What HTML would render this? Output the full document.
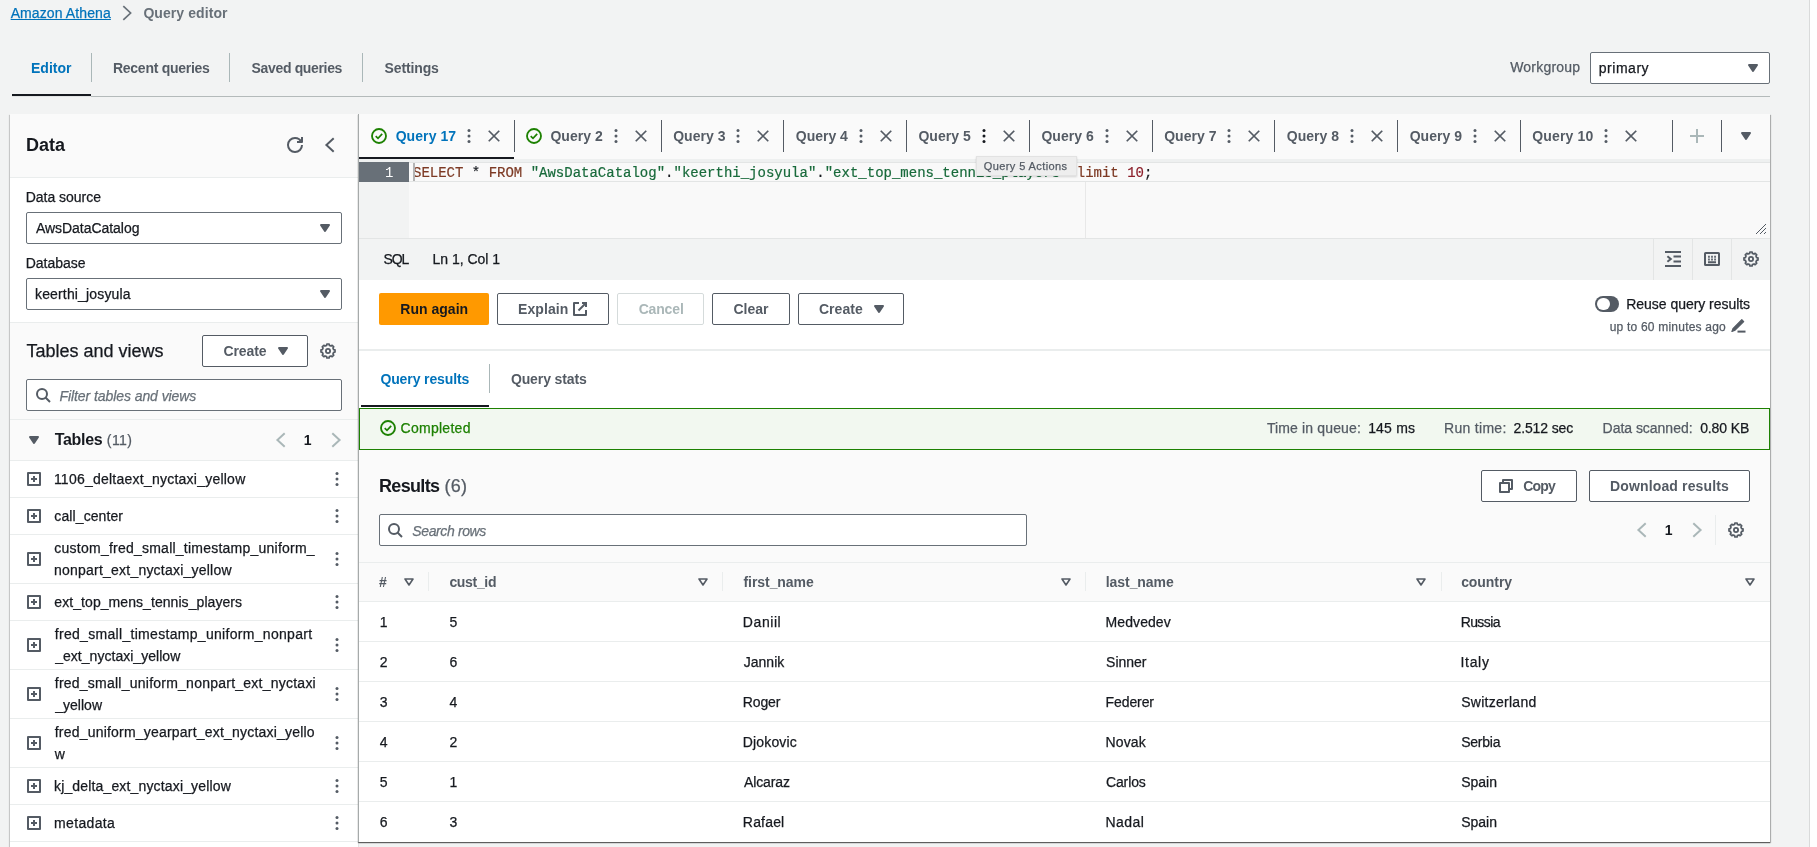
<!DOCTYPE html>
<html lang="en"><head><meta charset="utf-8"><title>Athena Query editor</title>
<style>
html,body{margin:0;padding:0}
body{width:1817px;height:847px;overflow:hidden;background:#f2f3f3;font-family:"Liberation Sans", sans-serif;font-size:14px;color:#16191f;position:relative}
</style></head><body>
<div id="app" style="position:absolute;left:0;top:0;width:1817px;height:847px;overflow:hidden;will-change:transform">
<div style="position:absolute;left:1809px;top:0px;width:1px;height:847px;background:#d9dada"></div>
<div style="position:absolute;left:1810px;top:0px;width:7px;height:847px;background:#fefefe"></div>
<div style="position:absolute;left:10.67px;top:2.0px;line-height:22px;font-size:14px;font-weight:400;color:#0073bb;white-space:pre;letter-spacing:0.106px;text-decoration:underline;-webkit-text-stroke:0.25px;">Amazon Athena</div>
<svg width="16" height="16" viewBox="0 0 16 16" style="position:absolute;left:118.6px;top:5.0px;overflow:visible"><path d="M4.300 1.200L11.600 8l-7.300 6.800" fill="none" stroke="#687078" stroke-width="1.7"/></svg>
<div style="position:absolute;left:143.38px;top:2.0px;line-height:22px;font-size:14px;font-weight:700;color:#687078;white-space:pre;letter-spacing:0.081px;">Query editor</div>
<div style="position:absolute;left:91px;top:96px;width:1679px;height:1px;background:#b4baba"></div>
<div style="position:absolute;left:12px;top:96px;width:79px;height:1px;background:#e3e5e5"></div>
<div style="position:absolute;left:12px;top:94px;width:79px;height:2px;background:#16191f"></div>
<div style="position:absolute;left:31.01px;top:57.0px;line-height:22px;font-size:14px;font-weight:700;color:#0073bb;white-space:pre;letter-spacing:0.009px;">Editor</div>
<div style="position:absolute;left:91px;top:53px;width:1px;height:29px;background:#aab7b8"></div>
<div style="position:absolute;left:113.01px;top:57.0px;line-height:22px;font-size:14px;font-weight:700;color:#545b64;white-space:pre;letter-spacing:-0.270px;">Recent queries</div>
<div style="position:absolute;left:229px;top:53px;width:1px;height:29px;background:#aab7b8"></div>
<div style="position:absolute;left:251.55px;top:57.0px;line-height:22px;font-size:14px;font-weight:700;color:#545b64;white-space:pre;letter-spacing:-0.342px;">Saved queries</div>
<div style="position:absolute;left:362px;top:53px;width:1px;height:29px;background:#aab7b8"></div>
<div style="position:absolute;left:384.55px;top:57.0px;line-height:22px;font-size:14px;font-weight:700;color:#545b64;white-space:pre;letter-spacing:-0.130px;">Settings</div>
<div style="position:absolute;left:1510.14px;top:56.0px;line-height:22px;font-size:14px;font-weight:400;color:#545b64;white-space:pre;letter-spacing:0.223px;-webkit-text-stroke:0.25px;">Workgroup</div>
<div style="position:absolute;left:1590px;top:52px;width:180px;height:32px;background:#fff;border:1px solid #687078;border-radius:2px;box-sizing:border-box"></div>
<div style="position:absolute;left:1598.8px;top:57.0px;line-height:22px;font-size:14px;font-weight:400;color:#16191f;white-space:pre;letter-spacing:0.518px;-webkit-text-stroke:0.25px;">primary</div>
<svg width="16" height="16" viewBox="0 0 16 16" style="position:absolute;left:1744.5px;top:60.0px;overflow:visible"><path d="M4 5h8l-4 6z" fill="#545b64" stroke="#545b64" stroke-width="2" stroke-linejoin="round"/></svg>
<div style="position:absolute;left:10px;top:114px;width:348px;height:740px;background:#fff;box-shadow:0 1px 1px 0 rgba(0,0,0,.35),-1px 1px 1px 0 rgba(0,0,0,.13)"></div>
<div style="position:absolute;left:10px;top:114px;width:348px;height:63px;background:#fafafa;border-bottom:1px solid #eaeded"></div>
<div style="position:absolute;left:26.0px;top:134.0px;line-height:22px;font-size:18px;font-weight:700;color:#16191f;white-space:pre;letter-spacing:-0.042px;">Data</div>
<svg width="16" height="16" viewBox="0 0 16 16" style="position:absolute;left:287.0px;top:137.0px;overflow:visible"><path d="M10 5h5V0" fill="none" stroke="#545b64" stroke-width="2" stroke-linejoin="round"/><path d="M15 8a6.957 6.957 0 0 1-7 7 6.957 6.957 0 0 1-7-7 6.957 6.957 0 0 1 7-7 6.870 6.870 0 0 1 6.300 4" fill="none" stroke="#545b64" stroke-width="2"/></svg>
<svg width="16" height="16" viewBox="0 0 16 16" style="position:absolute;left:322.0px;top:137.0px;overflow:visible"><path d="M11.700 1.200L4.400 8l7.300 6.800" fill="none" stroke="#545b64" stroke-width="2"/></svg>
<div style="position:absolute;left:25.8px;top:186.0px;line-height:22px;font-size:14px;font-weight:400;color:#16191f;white-space:pre;letter-spacing:-0.036px;-webkit-text-stroke:0.25px;">Data source</div>
<div style="position:absolute;left:26px;top:212px;width:316px;height:32px;background:#fff;border:1px solid #687078;border-radius:2px;box-sizing:border-box"></div>
<div style="position:absolute;left:35.92px;top:217.0px;line-height:22px;font-size:14px;font-weight:400;color:#16191f;white-space:pre;letter-spacing:-0.039px;-webkit-text-stroke:0.25px;">AwsDataCatalog</div>
<svg width="16" height="16" viewBox="0 0 16 16" style="position:absolute;left:316.5px;top:220.0px;overflow:visible"><path d="M4 5h8l-4 6z" fill="#545b64" stroke="#545b64" stroke-width="2" stroke-linejoin="round"/></svg>
<div style="position:absolute;left:25.8px;top:252.0px;line-height:22px;font-size:14px;font-weight:400;color:#16191f;white-space:pre;letter-spacing:-0.045px;-webkit-text-stroke:0.25px;">Database</div>
<div style="position:absolute;left:26px;top:278px;width:316px;height:32px;background:#fff;border:1px solid #687078;border-radius:2px;box-sizing:border-box"></div>
<div style="position:absolute;left:35.01px;top:283.0px;line-height:22px;font-size:14px;font-weight:400;color:#16191f;white-space:pre;letter-spacing:0.154px;-webkit-text-stroke:0.25px;">keerthi_josyula</div>
<svg width="16" height="16" viewBox="0 0 16 16" style="position:absolute;left:316.5px;top:286.0px;overflow:visible"><path d="M4 5h8l-4 6z" fill="#545b64" stroke="#545b64" stroke-width="2" stroke-linejoin="round"/></svg>
<div style="position:absolute;left:10px;top:322px;width:348px;height:98px;background:#fafafa;border-top:1px solid #eaeded;border-bottom:1px solid #eaeded;box-sizing:border-box"></div>
<div style="position:absolute;left:26.55px;top:339.5px;line-height:22px;font-size:18px;font-weight:400;color:#16191f;white-space:pre;letter-spacing:-0.012px;-webkit-text-stroke:0.25px;">Tables and views</div>
<div style="position:absolute;left:202px;top:335px;width:106px;height:32px;background:#fff;border:1px solid #545b64;border-radius:2px;box-sizing:border-box"></div>
<div style="position:absolute;left:223.38px;top:340.0px;line-height:22px;font-size:14px;font-weight:700;color:#545b64;white-space:pre;letter-spacing:-0.088px;">Create</div>
<svg width="16" height="16" viewBox="0 0 16 16" style="position:absolute;left:274.5px;top:343.0px;overflow:visible"><path d="M4 5h8l-4 6z" fill="#545b64" stroke="#545b64" stroke-width="2" stroke-linejoin="round"/></svg>
<svg width="16" height="16" viewBox="0 0 16 16" style="position:absolute;left:320.25px;top:342.5px;overflow:visible"><path d="M6.65 2.36L6.89 0.99L9.11 0.99L9.35 2.36L11.03 3.05L12.17 2.26L13.74 3.83L12.95 4.97L13.64 6.65L15.01 6.89L15.01 9.11L13.64 9.35L12.95 11.03L13.74 12.17L12.17 13.74L11.03 12.95L9.35 13.64L9.11 15.01L6.89 15.01L6.65 13.64L4.97 12.95L3.83 13.74L2.26 12.17L3.05 11.03L2.36 9.35L0.99 9.11L0.99 6.89L2.36 6.65L3.05 4.97L2.26 3.83L3.83 2.26L4.97 3.05z" fill="none" stroke="#545b64" stroke-width="1.700" stroke-linejoin="round"/><circle cx="8" cy="8" r="2.100" fill="none" stroke="#545b64" stroke-width="1.800"/></svg>
<div style="position:absolute;left:26px;top:379px;width:316px;height:32px;background:#fff;border:1px solid #687078;border-radius:2px;box-sizing:border-box"></div>
<svg width="16" height="16" viewBox="0 0 16 16" style="position:absolute;left:35.0px;top:387.3px;overflow:visible"><circle cx="7" cy="7" r="5" fill="none" stroke="#545b64" stroke-width="2"/><path d="M15 15l-4.500-4.500" fill="none" stroke="#545b64" stroke-width="2"/></svg>
<div style="position:absolute;left:59.52px;top:384.5px;line-height:22px;font-size:14px;font-weight:400;color:#687078;white-space:pre;letter-spacing:-0.077px;font-style:italic;-webkit-text-stroke:0.25px;">Filter tables and views</div>
<div style="position:absolute;left:10px;top:420px;width:348px;height:41px;background:#fafafa;border-bottom:1px solid #eaeded;box-sizing:border-box"></div>
<svg width="16" height="16" viewBox="0 0 16 16" style="position:absolute;left:26.0px;top:431.5px;overflow:visible"><path d="M4 5h8l-4 6z" fill="#545b64" stroke="#545b64" stroke-width="2" stroke-linejoin="round"/></svg>
<div style="position:absolute;left:54.77px;top:428.5px;line-height:22px;font-size:16px;font-weight:700;color:#16191f;white-space:pre;letter-spacing:-0.313px;">Tables</div>
<div style="position:absolute;left:106.83px;top:429.0px;line-height:22px;font-size:14px;font-weight:400;color:#545b64;white-space:pre;letter-spacing:0.409px;-webkit-text-stroke:0.25px;">(11)</div>
<svg width="16" height="16" viewBox="0 0 16 16" style="position:absolute;left:272.5px;top:431.9px;overflow:visible"><path d="M11.700 1.200L4.400 8l7.300 6.800" fill="none" stroke="#aab7b8" stroke-width="2"/></svg>
<div style="position:absolute;left:303.86px;top:429.0px;line-height:22px;font-size:14px;font-weight:700;color:#16191f;white-space:pre;letter-spacing:0.000px;">1</div>
<svg width="16" height="16" viewBox="0 0 16 16" style="position:absolute;left:327.7px;top:431.9px;overflow:visible"><path d="M4.300 1.200L11.600 8l-7.300 6.800" fill="none" stroke="#aab7b8" stroke-width="2"/></svg>
<div style="position:absolute;left:10px;top:497px;width:348px;height:1px;background:#eaeded"></div>
<svg width="16" height="16" viewBox="0 0 16 16" style="position:absolute;left:26.0px;top:471.0px;overflow:visible"><path d="M2 2h12v12H2z" fill="none" stroke="#545b64" stroke-width="2" stroke-linejoin="round"/><path d="M5 8h6M8 5v6" fill="none" stroke="#545b64" stroke-width="2"/></svg>
<svg width="16" height="16" viewBox="0 0 16 16" style="position:absolute;left:328.9px;top:471.0px;overflow:visible"><circle cx="8" cy="2.500" r="1.500" fill="#545b64"/><circle cx="8" cy="8" r="1.500" fill="#545b64"/><circle cx="8" cy="13.500" r="1.500" fill="#545b64"/></svg>
<div style="position:absolute;left:53.88px;top:468.0px;line-height:22px;font-size:14px;font-weight:400;color:#16191f;white-space:pre;letter-spacing:0.237px;-webkit-text-stroke:0.25px;">1106_deltaext_nyctaxi_yellow</div>
<div style="position:absolute;left:10px;top:534px;width:348px;height:1px;background:#eaeded"></div>
<svg width="16" height="16" viewBox="0 0 16 16" style="position:absolute;left:26.0px;top:508.0px;overflow:visible"><path d="M2 2h12v12H2z" fill="none" stroke="#545b64" stroke-width="2" stroke-linejoin="round"/><path d="M5 8h6M8 5v6" fill="none" stroke="#545b64" stroke-width="2"/></svg>
<svg width="16" height="16" viewBox="0 0 16 16" style="position:absolute;left:328.9px;top:508.0px;overflow:visible"><circle cx="8" cy="2.500" r="1.500" fill="#545b64"/><circle cx="8" cy="8" r="1.500" fill="#545b64"/><circle cx="8" cy="13.500" r="1.500" fill="#545b64"/></svg>
<div style="position:absolute;left:54.36px;top:505.0px;line-height:22px;font-size:14px;font-weight:400;color:#16191f;white-space:pre;letter-spacing:0.097px;-webkit-text-stroke:0.25px;">call_center</div>
<div style="position:absolute;left:10px;top:583px;width:348px;height:1px;background:#eaeded"></div>
<svg width="16" height="16" viewBox="0 0 16 16" style="position:absolute;left:26.0px;top:551.0px;overflow:visible"><path d="M2 2h12v12H2z" fill="none" stroke="#545b64" stroke-width="2" stroke-linejoin="round"/><path d="M5 8h6M8 5v6" fill="none" stroke="#545b64" stroke-width="2"/></svg>
<svg width="16" height="16" viewBox="0 0 16 16" style="position:absolute;left:328.9px;top:551.0px;overflow:visible"><circle cx="8" cy="2.500" r="1.500" fill="#545b64"/><circle cx="8" cy="8" r="1.500" fill="#545b64"/><circle cx="8" cy="13.500" r="1.500" fill="#545b64"/></svg>
<div style="position:absolute;left:54.36px;top:537.0px;line-height:22px;font-size:14px;font-weight:400;color:#16191f;white-space:pre;letter-spacing:0.234px;-webkit-text-stroke:0.25px;">custom_fred_small_timestamp_uniform_</div>
<div style="position:absolute;left:54.02px;top:559.0px;line-height:22px;font-size:14px;font-weight:400;color:#16191f;white-space:pre;letter-spacing:0.220px;-webkit-text-stroke:0.25px;">nonpart_ext_nyctaxi_yellow</div>
<div style="position:absolute;left:10px;top:620px;width:348px;height:1px;background:#eaeded"></div>
<svg width="16" height="16" viewBox="0 0 16 16" style="position:absolute;left:26.0px;top:594.0px;overflow:visible"><path d="M2 2h12v12H2z" fill="none" stroke="#545b64" stroke-width="2" stroke-linejoin="round"/><path d="M5 8h6M8 5v6" fill="none" stroke="#545b64" stroke-width="2"/></svg>
<svg width="16" height="16" viewBox="0 0 16 16" style="position:absolute;left:328.9px;top:594.0px;overflow:visible"><circle cx="8" cy="2.500" r="1.500" fill="#545b64"/><circle cx="8" cy="8" r="1.500" fill="#545b64"/><circle cx="8" cy="13.500" r="1.500" fill="#545b64"/></svg>
<div style="position:absolute;left:54.36px;top:591.0px;line-height:22px;font-size:14px;font-weight:400;color:#16191f;white-space:pre;letter-spacing:0.065px;-webkit-text-stroke:0.25px;">ext_top_mens_tennis_players</div>
<div style="position:absolute;left:10px;top:669px;width:348px;height:1px;background:#eaeded"></div>
<svg width="16" height="16" viewBox="0 0 16 16" style="position:absolute;left:26.0px;top:637.0px;overflow:visible"><path d="M2 2h12v12H2z" fill="none" stroke="#545b64" stroke-width="2" stroke-linejoin="round"/><path d="M5 8h6M8 5v6" fill="none" stroke="#545b64" stroke-width="2"/></svg>
<svg width="16" height="16" viewBox="0 0 16 16" style="position:absolute;left:328.9px;top:637.0px;overflow:visible"><circle cx="8" cy="2.500" r="1.500" fill="#545b64"/><circle cx="8" cy="8" r="1.500" fill="#545b64"/><circle cx="8" cy="13.500" r="1.500" fill="#545b64"/></svg>
<div style="position:absolute;left:54.75px;top:623.0px;line-height:22px;font-size:14px;font-weight:400;color:#16191f;white-space:pre;letter-spacing:0.306px;-webkit-text-stroke:0.25px;">fred_small_timestamp_uniform_nonpart</div>
<div style="position:absolute;left:55.16px;top:645.0px;line-height:22px;font-size:14px;font-weight:400;color:#16191f;white-space:pre;letter-spacing:0.033px;-webkit-text-stroke:0.25px;">_ext_nyctaxi_yellow</div>
<div style="position:absolute;left:10px;top:718px;width:348px;height:1px;background:#eaeded"></div>
<svg width="16" height="16" viewBox="0 0 16 16" style="position:absolute;left:26.0px;top:686.0px;overflow:visible"><path d="M2 2h12v12H2z" fill="none" stroke="#545b64" stroke-width="2" stroke-linejoin="round"/><path d="M5 8h6M8 5v6" fill="none" stroke="#545b64" stroke-width="2"/></svg>
<svg width="16" height="16" viewBox="0 0 16 16" style="position:absolute;left:328.9px;top:686.0px;overflow:visible"><circle cx="8" cy="2.500" r="1.500" fill="#545b64"/><circle cx="8" cy="8" r="1.500" fill="#545b64"/><circle cx="8" cy="13.500" r="1.500" fill="#545b64"/></svg>
<div style="position:absolute;left:54.75px;top:672.0px;line-height:22px;font-size:14px;font-weight:400;color:#16191f;white-space:pre;letter-spacing:0.239px;-webkit-text-stroke:0.25px;">fred_small_uniform_nonpart_ext_nyctaxi</div>
<div style="position:absolute;left:55.16px;top:694.0px;line-height:22px;font-size:14px;font-weight:400;color:#16191f;white-space:pre;letter-spacing:0.025px;-webkit-text-stroke:0.25px;">_yellow</div>
<div style="position:absolute;left:10px;top:767px;width:348px;height:1px;background:#eaeded"></div>
<svg width="16" height="16" viewBox="0 0 16 16" style="position:absolute;left:26.0px;top:735.0px;overflow:visible"><path d="M2 2h12v12H2z" fill="none" stroke="#545b64" stroke-width="2" stroke-linejoin="round"/><path d="M5 8h6M8 5v6" fill="none" stroke="#545b64" stroke-width="2"/></svg>
<svg width="16" height="16" viewBox="0 0 16 16" style="position:absolute;left:328.9px;top:735.0px;overflow:visible"><circle cx="8" cy="2.500" r="1.500" fill="#545b64"/><circle cx="8" cy="8" r="1.500" fill="#545b64"/><circle cx="8" cy="13.500" r="1.500" fill="#545b64"/></svg>
<div style="position:absolute;left:54.75px;top:721.0px;line-height:22px;font-size:14px;font-weight:400;color:#16191f;white-space:pre;letter-spacing:0.204px;-webkit-text-stroke:0.25px;">fred_uniform_yearpart_ext_nyctaxi_yello</div>
<div style="position:absolute;left:54.81px;top:743.0px;line-height:22px;font-size:14px;font-weight:400;color:#16191f;white-space:pre;letter-spacing:0.000px;-webkit-text-stroke:0.25px;">w</div>
<div style="position:absolute;left:10px;top:804px;width:348px;height:1px;background:#eaeded"></div>
<svg width="16" height="16" viewBox="0 0 16 16" style="position:absolute;left:26.0px;top:778.0px;overflow:visible"><path d="M2 2h12v12H2z" fill="none" stroke="#545b64" stroke-width="2" stroke-linejoin="round"/><path d="M5 8h6M8 5v6" fill="none" stroke="#545b64" stroke-width="2"/></svg>
<svg width="16" height="16" viewBox="0 0 16 16" style="position:absolute;left:328.9px;top:778.0px;overflow:visible"><circle cx="8" cy="2.500" r="1.500" fill="#545b64"/><circle cx="8" cy="8" r="1.500" fill="#545b64"/><circle cx="8" cy="13.500" r="1.500" fill="#545b64"/></svg>
<div style="position:absolute;left:54.01px;top:775.0px;line-height:22px;font-size:14px;font-weight:400;color:#16191f;white-space:pre;letter-spacing:0.154px;-webkit-text-stroke:0.25px;">kj_delta_ext_nyctaxi_yellow</div>
<div style="position:absolute;left:10px;top:841px;width:348px;height:1px;background:#eaeded"></div>
<svg width="16" height="16" viewBox="0 0 16 16" style="position:absolute;left:26.0px;top:815.0px;overflow:visible"><path d="M2 2h12v12H2z" fill="none" stroke="#545b64" stroke-width="2" stroke-linejoin="round"/><path d="M5 8h6M8 5v6" fill="none" stroke="#545b64" stroke-width="2"/></svg>
<svg width="16" height="16" viewBox="0 0 16 16" style="position:absolute;left:328.9px;top:815.0px;overflow:visible"><circle cx="8" cy="2.500" r="1.500" fill="#545b64"/><circle cx="8" cy="8" r="1.500" fill="#545b64"/><circle cx="8" cy="13.500" r="1.500" fill="#545b64"/></svg>
<div style="position:absolute;left:54.02px;top:812.0px;line-height:22px;font-size:14px;font-weight:400;color:#16191f;white-space:pre;letter-spacing:0.344px;-webkit-text-stroke:0.25px;">metadata</div>
<div style="position:absolute;left:358px;top:114px;width:1412px;height:728px;background:#fff;border-left:1px solid #a6aaaa;box-sizing:border-box;box-shadow:0 1px 1px 0 rgba(0,0,0,.5),1px 1px 1px 0 rgba(0,0,0,.22)"></div>
<div style="position:absolute;left:359px;top:114px;width:1411px;height:45px;background:#fafafa"></div>
<div style="position:absolute;left:359px;top:159px;width:1411px;height:3px;background:#eef0f0"></div>
<svg width="16" height="16" viewBox="0 0 16 16" style="position:absolute;left:371.0px;top:128.0px;overflow:visible"><circle cx="8" cy="8" r="7" fill="none" stroke="#1d8102" stroke-width="1.850"/><path d="M4.700 8.200l2.300 2.200 4.200-4.500" fill="none" stroke="#1d8102" stroke-width="1.700"/></svg>
<div style="position:absolute;left:395.63px;top:125.0px;line-height:22px;font-size:14px;font-weight:700;color:#0073bb;white-space:pre;letter-spacing:0.086px;">Query 17</div>
<svg width="16" height="16" viewBox="0 0 16 16" style="position:absolute;left:525.5px;top:128.0px;overflow:visible"><circle cx="8" cy="8" r="7" fill="none" stroke="#1d8102" stroke-width="1.850"/><path d="M4.700 8.200l2.300 2.200 4.200-4.500" fill="none" stroke="#1d8102" stroke-width="1.700"/></svg>
<div style="position:absolute;left:550.38px;top:125.0px;line-height:22px;font-size:14px;font-weight:700;color:#545b64;white-space:pre;letter-spacing:0.057px;">Query 2</div>
<div style="position:absolute;left:673.13px;top:125.0px;line-height:22px;font-size:14px;font-weight:700;color:#545b64;white-space:pre;letter-spacing:0.040px;">Query 3</div>
<div style="position:absolute;left:795.83px;top:125.0px;line-height:22px;font-size:14px;font-weight:700;color:#545b64;white-space:pre;letter-spacing:-0.032px;">Query 4</div>
<div style="position:absolute;left:918.43px;top:125.0px;line-height:22px;font-size:14px;font-weight:700;color:#545b64;white-space:pre;letter-spacing:0.021px;">Query 5</div>
<div style="position:absolute;left:1041.43px;top:125.0px;line-height:22px;font-size:14px;font-weight:700;color:#545b64;white-space:pre;letter-spacing:0.040px;">Query 6</div>
<div style="position:absolute;left:1164.13px;top:125.0px;line-height:22px;font-size:14px;font-weight:700;color:#545b64;white-space:pre;letter-spacing:0.058px;">Query 7</div>
<div style="position:absolute;left:1286.73px;top:125.0px;line-height:22px;font-size:14px;font-weight:700;color:#545b64;white-space:pre;letter-spacing:0.027px;">Query 8</div>
<div style="position:absolute;left:1409.63px;top:125.0px;line-height:22px;font-size:14px;font-weight:700;color:#545b64;white-space:pre;letter-spacing:0.042px;">Query 9</div>
<div style="position:absolute;left:1532.13px;top:125.0px;line-height:22px;font-size:14px;font-weight:700;color:#545b64;white-space:pre;letter-spacing:0.187px;">Query 10</div>
<svg width="16" height="16" viewBox="0 0 16 16" style="position:absolute;left:460.75px;top:128.0px;overflow:visible"><circle cx="8" cy="2.500" r="1.500" fill="#545b64"/><circle cx="8" cy="8" r="1.500" fill="#545b64"/><circle cx="8" cy="13.500" r="1.500" fill="#545b64"/></svg>
<svg width="14" height="14" viewBox="0 0 16 16" style="position:absolute;left:486.75px;top:129.0px;overflow:visible"><path d="M2 2l12 12M14 2L2 14" fill="none" stroke="#545b64" stroke-width="2"/></svg>
<svg width="16" height="16" viewBox="0 0 16 16" style="position:absolute;left:607.75px;top:128.0px;overflow:visible"><circle cx="8" cy="2.500" r="1.500" fill="#545b64"/><circle cx="8" cy="8" r="1.500" fill="#545b64"/><circle cx="8" cy="13.500" r="1.500" fill="#545b64"/></svg>
<svg width="14" height="14" viewBox="0 0 16 16" style="position:absolute;left:634.0px;top:129.0px;overflow:visible"><path d="M2 2l12 12M14 2L2 14" fill="none" stroke="#545b64" stroke-width="2"/></svg>
<svg width="16" height="16" viewBox="0 0 16 16" style="position:absolute;left:730.2px;top:128.0px;overflow:visible"><circle cx="8" cy="2.500" r="1.500" fill="#545b64"/><circle cx="8" cy="8" r="1.500" fill="#545b64"/><circle cx="8" cy="13.500" r="1.500" fill="#545b64"/></svg>
<svg width="14" height="14" viewBox="0 0 16 16" style="position:absolute;left:756.0px;top:129.0px;overflow:visible"><path d="M2 2l12 12M14 2L2 14" fill="none" stroke="#545b64" stroke-width="2"/></svg>
<svg width="16" height="16" viewBox="0 0 16 16" style="position:absolute;left:852.8px;top:128.0px;overflow:visible"><circle cx="8" cy="2.500" r="1.500" fill="#545b64"/><circle cx="8" cy="8" r="1.500" fill="#545b64"/><circle cx="8" cy="13.500" r="1.500" fill="#545b64"/></svg>
<svg width="14" height="14" viewBox="0 0 16 16" style="position:absolute;left:879.0px;top:129.0px;overflow:visible"><path d="M2 2l12 12M14 2L2 14" fill="none" stroke="#545b64" stroke-width="2"/></svg>
<svg width="16" height="16" viewBox="0 0 16 16" style="position:absolute;left:975.8px;top:128.0px;overflow:visible"><circle cx="8" cy="2.500" r="1.500" fill="#16191f"/><circle cx="8" cy="8" r="1.500" fill="#16191f"/><circle cx="8" cy="13.500" r="1.500" fill="#16191f"/></svg>
<svg width="14" height="14" viewBox="0 0 16 16" style="position:absolute;left:1002.0px;top:129.0px;overflow:visible"><path d="M2 2l12 12M14 2L2 14" fill="none" stroke="#545b64" stroke-width="2"/></svg>
<svg width="16" height="16" viewBox="0 0 16 16" style="position:absolute;left:1098.8px;top:128.0px;overflow:visible"><circle cx="8" cy="2.500" r="1.500" fill="#545b64"/><circle cx="8" cy="8" r="1.500" fill="#545b64"/><circle cx="8" cy="13.500" r="1.500" fill="#545b64"/></svg>
<svg width="14" height="14" viewBox="0 0 16 16" style="position:absolute;left:1125.0px;top:129.0px;overflow:visible"><path d="M2 2l12 12M14 2L2 14" fill="none" stroke="#545b64" stroke-width="2"/></svg>
<svg width="16" height="16" viewBox="0 0 16 16" style="position:absolute;left:1221.2px;top:128.0px;overflow:visible"><circle cx="8" cy="2.500" r="1.500" fill="#545b64"/><circle cx="8" cy="8" r="1.500" fill="#545b64"/><circle cx="8" cy="13.500" r="1.500" fill="#545b64"/></svg>
<svg width="14" height="14" viewBox="0 0 16 16" style="position:absolute;left:1247.0px;top:129.0px;overflow:visible"><path d="M2 2l12 12M14 2L2 14" fill="none" stroke="#545b64" stroke-width="2"/></svg>
<svg width="16" height="16" viewBox="0 0 16 16" style="position:absolute;left:1344.1px;top:128.0px;overflow:visible"><circle cx="8" cy="2.500" r="1.500" fill="#545b64"/><circle cx="8" cy="8" r="1.500" fill="#545b64"/><circle cx="8" cy="13.500" r="1.500" fill="#545b64"/></svg>
<svg width="14" height="14" viewBox="0 0 16 16" style="position:absolute;left:1370.0px;top:129.0px;overflow:visible"><path d="M2 2l12 12M14 2L2 14" fill="none" stroke="#545b64" stroke-width="2"/></svg>
<svg width="16" height="16" viewBox="0 0 16 16" style="position:absolute;left:1467.0px;top:128.0px;overflow:visible"><circle cx="8" cy="2.500" r="1.500" fill="#545b64"/><circle cx="8" cy="8" r="1.500" fill="#545b64"/><circle cx="8" cy="13.500" r="1.500" fill="#545b64"/></svg>
<svg width="14" height="14" viewBox="0 0 16 16" style="position:absolute;left:1492.8px;top:129.0px;overflow:visible"><path d="M2 2l12 12M14 2L2 14" fill="none" stroke="#545b64" stroke-width="2"/></svg>
<svg width="16" height="16" viewBox="0 0 16 16" style="position:absolute;left:1597.8px;top:128.0px;overflow:visible"><circle cx="8" cy="2.500" r="1.500" fill="#545b64"/><circle cx="8" cy="8" r="1.500" fill="#545b64"/><circle cx="8" cy="13.500" r="1.500" fill="#545b64"/></svg>
<svg width="14" height="14" viewBox="0 0 16 16" style="position:absolute;left:1623.9px;top:129.0px;overflow:visible"><path d="M2 2l12 12M14 2L2 14" fill="none" stroke="#545b64" stroke-width="2"/></svg>
<div style="position:absolute;left:514px;top:120px;width:1px;height:32px;background:#545b64"></div>
<div style="position:absolute;left:661px;top:120px;width:1px;height:32px;background:#545b64"></div>
<div style="position:absolute;left:783px;top:120px;width:1px;height:32px;background:#545b64"></div>
<div style="position:absolute;left:906px;top:120px;width:1px;height:32px;background:#545b64"></div>
<div style="position:absolute;left:1029px;top:120px;width:1px;height:32px;background:#545b64"></div>
<div style="position:absolute;left:1152px;top:120px;width:1px;height:32px;background:#545b64"></div>
<div style="position:absolute;left:1274px;top:120px;width:1px;height:32px;background:#545b64"></div>
<div style="position:absolute;left:1397px;top:120px;width:1px;height:32px;background:#545b64"></div>
<div style="position:absolute;left:1520px;top:120px;width:1px;height:32px;background:#545b64"></div>
<div style="position:absolute;left:1672px;top:120px;width:1px;height:32px;background:#545b64"></div>
<div style="position:absolute;left:1721px;top:120px;width:1px;height:32px;background:#545b64"></div>
<div style="position:absolute;left:359px;top:157px;width:155px;height:2px;background:#16191f"></div>
<svg width="16" height="16" viewBox="0 0 16 16" style="position:absolute;left:1688.7px;top:128.0px;overflow:visible"><path d="M8 1v14M15 8H1" fill="none" stroke="#aab7b8" stroke-width="2"/></svg>
<svg width="16" height="16" viewBox="0 0 16 16" style="position:absolute;left:1737.5px;top:128.0px;overflow:visible"><path d="M4 5h8l-4 6z" fill="#545b64" stroke="#545b64" stroke-width="2" stroke-linejoin="round"/></svg>
<div style="position:absolute;left:359px;top:162px;width:1411px;height:76px;background:#f9f9f9"></div>
<div style="position:absolute;left:359px;top:162px;width:50px;height:76px;background:#f2f3f3"></div>
<div style="position:absolute;left:409px;top:162px;width:1361px;height:1px;background:#e3e5e5"></div>
<div style="position:absolute;left:409px;top:181px;width:1361px;height:1px;background:#e3e5e5"></div>
<div style="position:absolute;left:359px;top:162px;width:50px;height:20px;background:#687078"></div>
<div style="position:absolute;left:385px;top:163.5px;line-height:19px;font-size:14px;font-weight:400;color:#fff;white-space:pre;font-family:'Liberation Mono', monospace;">1</div>
<div style="position:absolute;left:1085px;top:182px;width:1px;height:56px;background:#e8e8e8"></div>
<div style="position:absolute;left:413px;top:163.5px;line-height:19px;font-size:14px;font-weight:400;color:#16191f;white-space:pre;font-family:'Liberation Mono', monospace;-webkit-text-stroke:0.2px;"><span style="color:#7d3a24">SELECT</span> <span style="color:#16191f">*</span> <span style="color:#7d3a24">FROM</span> <span style="color:#186a3b">"AwsDataCatalog"</span><span style="color:#16191f">.</span><span style="color:#186a3b">"keerthi_josyula"</span><span style="color:#16191f">.</span><span style="color:#186a3b">"ext_top_mens_tennis_players"</span> <span style="color:#7d3a24">limit</span> <span style="color:#8c1f2a">10</span><span style="color:#16191f">;</span></div>
<div style="position:absolute;left:412.5px;top:163px;width:2px;height:18px;background:#b5b5b5"></div>
<div style="position:absolute;left:976px;top:156px;width:101px;height:20px;background:#eeeeee;border:1px solid #e2e2e2;box-sizing:border-box;box-shadow:0 1px 2px rgba(0,0,0,.15)"></div>
<div style="position:absolute;left:983.68px;top:159.0px;line-height:14px;font-size:11px;font-weight:400;color:#545b64;white-space:pre;letter-spacing:0.412px;-webkit-text-stroke:0.25px;">Query 5 Actions</div>
<svg width="12" height="12" viewBox="0 0 12 12" style="position:absolute;left:1755px;top:223px"><path d="M1 11L11 1M5 11l6-6M9 11l2-2" fill="none" stroke="#545b64" stroke-width="1"/></svg>
<div style="position:absolute;left:359px;top:238px;width:1411px;height:42px;background:#f2f3f3;border-top:1px solid #e3e5e5;box-sizing:border-box"></div>
<div style="position:absolute;left:383.56px;top:248.0px;line-height:22px;font-size:14px;font-weight:400;color:#16191f;white-space:pre;letter-spacing:-1.158px;-webkit-text-stroke:0.25px;">SQL</div>
<div style="position:absolute;left:432.55px;top:248.0px;line-height:22px;font-size:14px;font-weight:400;color:#16191f;white-space:pre;letter-spacing:-0.029px;-webkit-text-stroke:0.25px;">Ln 1, Col 1</div>
<div style="position:absolute;left:1653px;top:239px;width:1px;height:41px;background:#e3e5e5"></div>
<div style="position:absolute;left:1692px;top:239px;width:1px;height:41px;background:#e3e5e5"></div>
<div style="position:absolute;left:1731px;top:239px;width:1px;height:41px;background:#e3e5e5"></div>
<svg width="16" height="16" viewBox="0 0 16 16" style="position:absolute;left:1665.0px;top:251.0px;overflow:visible"><path d="M0 1h16M0 15h16M8.500 5.500h7.500M8.500 10.500h7.500M2.400 5.200L5.800 8l-3.400 2.800" fill="none" stroke="#545b64" stroke-width="2"/></svg>
<svg width="16" height="16" viewBox="0 0 16 16" style="position:absolute;left:1704.0px;top:251.0px;overflow:visible"><rect x="1" y="2" width="14" height="12" rx="0.600" fill="none" stroke="#545b64" stroke-width="2"/><path d="M4.100 5.800h1.700M7.150 5.800h1.700M10.200 5.800h1.700M4.100 8.400h1.700M7.150 8.400h1.700M10.200 8.400h1.700M4 11.200h8" fill="none" stroke="#545b64" stroke-width="2" stroke-width="1.500"/></svg>
<svg width="16" height="16" viewBox="0 0 16 16" style="position:absolute;left:1743.0px;top:251.0px;overflow:visible"><path d="M6.65 2.36L6.89 0.99L9.11 0.99L9.35 2.36L11.03 3.05L12.17 2.26L13.74 3.83L12.95 4.97L13.64 6.65L15.01 6.89L15.01 9.11L13.64 9.35L12.95 11.03L13.74 12.17L12.17 13.74L11.03 12.95L9.35 13.64L9.11 15.01L6.89 15.01L6.65 13.64L4.97 12.95L3.83 13.74L2.26 12.17L3.05 11.03L2.36 9.35L0.99 9.11L0.99 6.89L2.36 6.65L3.05 4.97L2.26 3.83L3.83 2.26L4.97 3.05z" fill="none" stroke="#545b64" stroke-width="1.700" stroke-linejoin="round"/><circle cx="8" cy="8" r="2.100" fill="none" stroke="#545b64" stroke-width="1.800"/></svg>
<div style="position:absolute;left:379px;top:293px;width:110px;height:32px;background:#ff9900;border-radius:2px"></div>
<div style="position:absolute;left:400.26px;top:298.0px;line-height:22px;font-size:14px;font-weight:700;color:#16191f;white-space:pre;letter-spacing:0.029px;">Run again</div>
<div style="position:absolute;left:497px;top:293px;width:112px;height:32px;background:#fff;border:1px solid #545b64;border-radius:2px;box-sizing:border-box"></div>
<div style="position:absolute;left:518.01px;top:298.0px;line-height:22px;font-size:14px;font-weight:700;color:#545b64;white-space:pre;letter-spacing:0.101px;">Explain</div>
<svg width="16" height="16" viewBox="0 0 16 16" style="position:absolute;left:572.1px;top:300.8px;overflow:visible"><path d="M10 2h4v4" fill="none" stroke="#545b64" stroke-width="2"/><path d="M6.500 9.500L14 2" fill="none" stroke="#545b64" stroke-width="2"/><path d="M14 9.048V14H2V2h5" fill="none" stroke="#545b64" stroke-width="2" stroke-linejoin="round"/></svg>
<div style="position:absolute;left:617px;top:293px;width:87px;height:32px;background:#fff;border:1px solid #d5dbdb;border-radius:2px;box-sizing:border-box"></div>
<div style="position:absolute;left:638.63px;top:298.0px;line-height:22px;font-size:14px;font-weight:700;color:#aab7b8;white-space:pre;letter-spacing:-0.151px;">Cancel</div>
<div style="position:absolute;left:712px;top:293px;width:78px;height:32px;background:#fff;border:1px solid #545b64;border-radius:2px;box-sizing:border-box"></div>
<div style="position:absolute;left:733.38px;top:298.0px;line-height:22px;font-size:14px;font-weight:700;color:#545b64;white-space:pre;letter-spacing:0.026px;">Clear</div>
<div style="position:absolute;left:798px;top:293px;width:106px;height:32px;background:#fff;border:1px solid #545b64;border-radius:2px;box-sizing:border-box"></div>
<div style="position:absolute;left:818.93px;top:298.0px;line-height:22px;font-size:14px;font-weight:700;color:#545b64;white-space:pre;letter-spacing:0.072px;">Create</div>
<svg width="16" height="16" viewBox="0 0 16 16" style="position:absolute;left:871.0px;top:301.0px;overflow:visible"><path d="M4 5h8l-4 6z" fill="#545b64" stroke="#545b64" stroke-width="2" stroke-linejoin="round"/></svg>
<div style="position:absolute;left:1595px;top:296px;width:24px;height:16px;background:#545b64;border-radius:8px"></div>
<div style="position:absolute;left:1597px;top:297.75px;width:12.5px;height:12.5px;background:#fff;border-radius:7px"></div>
<div style="position:absolute;left:1626.3px;top:293.0px;line-height:22px;font-size:14px;font-weight:400;color:#16191f;white-space:pre;letter-spacing:-0.042px;-webkit-text-stroke:0.25px;">Reuse query results</div>
<div style="position:absolute;left:1609.67px;top:319.0px;line-height:16px;font-size:12px;font-weight:400;color:#545b64;white-space:pre;letter-spacing:0.213px;-webkit-text-stroke:0.25px;">up to 60 minutes ago</div>
<svg width="16" height="16" viewBox="0 0 16 16" style="position:absolute;left:1729.5px;top:317.0px;overflow:visible"><path d="M3.200 11.300L11.800 2.700l1.900 1.900L5.100 13.200 1.900 14.500z" fill="#545b64" stroke="#545b64" stroke-width="1.200" stroke-linejoin="round"/><path d="M7.500 14.600h8" fill="none" stroke="#545b64" stroke-width="2"/></svg>
<div style="position:absolute;left:359px;top:349px;width:1411px;height:2px;background:#eaeded"></div>
<div style="position:absolute;left:380.38px;top:368.0px;line-height:22px;font-size:14px;font-weight:700;color:#0073bb;white-space:pre;letter-spacing:-0.106px;">Query results</div>
<div style="position:absolute;left:489px;top:364px;width:1px;height:29px;background:#aab7b8"></div>
<div style="position:absolute;left:510.88px;top:368.0px;line-height:22px;font-size:14px;font-weight:700;color:#545b64;white-space:pre;letter-spacing:-0.105px;">Query stats</div>
<div style="position:absolute;left:361px;top:405px;width:128px;height:2px;background:#16191f"></div>
<div style="position:absolute;left:359px;top:408px;width:1411px;height:42px;background:#f2f8f0;border:1px solid #1d8102;box-sizing:border-box"></div>
<svg width="16" height="16" viewBox="0 0 16 16" style="position:absolute;left:379.5px;top:420.0px;overflow:visible"><circle cx="8" cy="8" r="7" fill="none" stroke="#1d8102" stroke-width="1.850"/><path d="M4.700 8.200l2.300 2.200 4.200-4.500" fill="none" stroke="#1d8102" stroke-width="1.700"/></svg>
<div style="position:absolute;left:400.49px;top:417.0px;line-height:22px;font-size:14px;font-weight:400;color:#1d8102;white-space:pre;letter-spacing:0.283px;-webkit-text-stroke:0.25px;">Completed</div>
<div style="position:absolute;left:1266.89px;top:417.0px;line-height:22px;font-size:14px;font-weight:400;color:#545b64;white-space:pre;letter-spacing:0.142px;-webkit-text-stroke:0.25px;">Time in queue:</div>
<div style="position:absolute;left:1368.13px;top:417.0px;line-height:22px;font-size:14px;font-weight:400;color:#16191f;white-space:pre;letter-spacing:0.200px;-webkit-text-stroke:0.25px;">145 ms</div>
<div style="position:absolute;left:1444.05px;top:417.0px;line-height:22px;font-size:14px;font-weight:400;color:#545b64;white-space:pre;letter-spacing:0.294px;-webkit-text-stroke:0.25px;">Run time:</div>
<div style="position:absolute;left:1513.5px;top:417.0px;line-height:22px;font-size:14px;font-weight:400;color:#16191f;white-space:pre;letter-spacing:-0.131px;-webkit-text-stroke:0.25px;">2.512 sec</div>
<div style="position:absolute;left:1602.55px;top:417.0px;line-height:22px;font-size:14px;font-weight:400;color:#545b64;white-space:pre;letter-spacing:-0.023px;-webkit-text-stroke:0.25px;">Data scanned:</div>
<div style="position:absolute;left:1700.15px;top:417.0px;line-height:22px;font-size:14px;font-weight:400;color:#16191f;white-space:pre;letter-spacing:-0.115px;-webkit-text-stroke:0.25px;">0.80 KB</div>
<div style="position:absolute;left:359px;top:450px;width:1411px;height:112px;background:#fafafa"></div>
<div style="position:absolute;left:379.0px;top:474.5px;line-height:22px;font-size:18px;font-weight:700;color:#16191f;white-space:pre;letter-spacing:-0.665px;">Results</div>
<div style="position:absolute;left:444.58px;top:474.5px;line-height:22px;font-size:18px;font-weight:400;color:#545b64;white-space:pre;letter-spacing:0.166px;-webkit-text-stroke:0.25px;">(6)</div>
<div style="position:absolute;left:1481px;top:470px;width:96px;height:32px;background:#fff;border:1px solid #545b64;border-radius:2px;box-sizing:border-box"></div>
<svg width="16" height="16" viewBox="0 0 16 16" style="position:absolute;left:1498.0px;top:478.0px;overflow:visible"><path d="M2 5h9v9H2z" fill="none" stroke="#545b64" stroke-width="2" stroke-linejoin="round"/><path d="M5 5V2h9v9h-3" fill="none" stroke="#545b64" stroke-width="2" stroke-linejoin="round"/></svg>
<div style="position:absolute;left:1523.13px;top:475.0px;line-height:22px;font-size:14px;font-weight:700;color:#545b64;white-space:pre;letter-spacing:-0.750px;">Copy</div>
<div style="position:absolute;left:1589px;top:470px;width:161px;height:32px;background:#fff;border:1px solid #545b64;border-radius:2px;box-sizing:border-box"></div>
<div style="position:absolute;left:1610.01px;top:475.0px;line-height:22px;font-size:14px;font-weight:700;color:#545b64;white-space:pre;letter-spacing:0.145px;">Download results</div>
<div style="position:absolute;left:379px;top:514px;width:648px;height:32px;background:#fff;border:1px solid #687078;border-radius:2px;box-sizing:border-box"></div>
<svg width="16" height="16" viewBox="0 0 16 16" style="position:absolute;left:387.0px;top:522.3px;overflow:visible"><circle cx="7" cy="7" r="5" fill="none" stroke="#545b64" stroke-width="2"/><path d="M15 15l-4.500-4.500" fill="none" stroke="#545b64" stroke-width="2"/></svg>
<div style="position:absolute;left:412.3px;top:519.5px;line-height:22px;font-size:14px;font-weight:400;color:#687078;white-space:pre;letter-spacing:-0.378px;font-style:italic;-webkit-text-stroke:0.25px;">Search rows</div>
<svg width="16" height="16" viewBox="0 0 16 16" style="position:absolute;left:1633.5px;top:522.4px;overflow:visible"><path d="M11.700 1.200L4.400 8l7.300 6.800" fill="none" stroke="#aab7b8" stroke-width="2"/></svg>
<div style="position:absolute;left:1664.86px;top:519.0px;line-height:22px;font-size:14px;font-weight:700;color:#16191f;white-space:pre;letter-spacing:0.000px;">1</div>
<svg width="16" height="16" viewBox="0 0 16 16" style="position:absolute;left:1688.7px;top:522.4px;overflow:visible"><path d="M4.300 1.200L11.600 8l-7.300 6.800" fill="none" stroke="#aab7b8" stroke-width="2"/></svg>
<div style="position:absolute;left:1715px;top:515px;width:1px;height:30px;background:#eaeded"></div>
<svg width="16" height="16" viewBox="0 0 16 16" style="position:absolute;left:1728.25px;top:522.0px;overflow:visible"><path d="M6.65 2.36L6.89 0.99L9.11 0.99L9.35 2.36L11.03 3.05L12.17 2.26L13.74 3.83L12.95 4.97L13.64 6.65L15.01 6.89L15.01 9.11L13.64 9.35L12.95 11.03L13.74 12.17L12.17 13.74L11.03 12.95L9.35 13.64L9.11 15.01L6.89 15.01L6.65 13.64L4.97 12.95L3.83 13.74L2.26 12.17L3.05 11.03L2.36 9.35L0.99 9.11L0.99 6.89L2.36 6.65L3.05 4.97L2.26 3.83L3.83 2.26L4.97 3.05z" fill="none" stroke="#545b64" stroke-width="1.700" stroke-linejoin="round"/><circle cx="8" cy="8" r="2.100" fill="none" stroke="#545b64" stroke-width="1.800"/></svg>
<div style="position:absolute;left:359px;top:562px;width:1411px;height:40px;background:#fafafa;border-top:1px solid #eaeded;border-bottom:1px solid #eaeded;box-sizing:border-box"></div>
<div style="position:absolute;left:378.94px;top:571.0px;line-height:22px;font-size:14px;font-weight:700;color:#545b64;white-space:pre;letter-spacing:0.000px;">#</div>
<div style="position:absolute;left:449.4px;top:571.0px;line-height:22px;font-size:14px;font-weight:700;color:#545b64;white-space:pre;letter-spacing:-0.324px;">cust_id</div>
<div style="position:absolute;left:743.46px;top:571.0px;line-height:22px;font-size:14px;font-weight:700;color:#545b64;white-space:pre;letter-spacing:-0.055px;">first_name</div>
<div style="position:absolute;left:1105.72px;top:571.0px;line-height:22px;font-size:14px;font-weight:700;color:#545b64;white-space:pre;letter-spacing:-0.054px;">last_name</div>
<div style="position:absolute;left:1461.15px;top:571.0px;line-height:22px;font-size:14px;font-weight:700;color:#545b64;white-space:pre;letter-spacing:-0.062px;">country</div>
<div style="position:absolute;left:428px;top:572px;width:1px;height:19px;background:#eaeded"></div>
<div style="position:absolute;left:722px;top:572px;width:1px;height:19px;background:#eaeded"></div>
<div style="position:absolute;left:1085px;top:572px;width:1px;height:19px;background:#eaeded"></div>
<div style="position:absolute;left:1441px;top:572px;width:1px;height:19px;background:#eaeded"></div>
<svg width="16" height="16" viewBox="0 0 16 16" style="position:absolute;left:401.0px;top:574.2px;overflow:visible"><path d="M4 5h8l-4 6z" fill="none" stroke="#545b64" stroke-width="1.6" stroke-linejoin="round"/></svg>
<svg width="16" height="16" viewBox="0 0 16 16" style="position:absolute;left:694.8px;top:574.2px;overflow:visible"><path d="M4 5h8l-4 6z" fill="none" stroke="#545b64" stroke-width="1.6" stroke-linejoin="round"/></svg>
<svg width="16" height="16" viewBox="0 0 16 16" style="position:absolute;left:1058.2px;top:574.2px;overflow:visible"><path d="M4 5h8l-4 6z" fill="none" stroke="#545b64" stroke-width="1.6" stroke-linejoin="round"/></svg>
<svg width="16" height="16" viewBox="0 0 16 16" style="position:absolute;left:1413.2px;top:574.2px;overflow:visible"><path d="M4 5h8l-4 6z" fill="none" stroke="#545b64" stroke-width="1.6" stroke-linejoin="round"/></svg>
<svg width="16" height="16" viewBox="0 0 16 16" style="position:absolute;left:1741.8px;top:574.2px;overflow:visible"><path d="M4 5h8l-4 6z" fill="none" stroke="#545b64" stroke-width="1.6" stroke-linejoin="round"/></svg>
<div style="position:absolute;left:359px;top:641px;width:1411px;height:1px;background:#eaeded"></div>
<div style="position:absolute;left:379.8px;top:611.4px;line-height:22px;font-size:14px;font-weight:400;color:#16191f;white-space:pre;-webkit-text-stroke:0.25px;">1</div>
<div style="position:absolute;left:449.55px;top:611.4px;line-height:22px;font-size:14px;font-weight:400;color:#16191f;white-space:pre;-webkit-text-stroke:0.25px;">5</div>
<div style="position:absolute;left:742.85px;top:611.4px;line-height:22px;font-size:14px;font-weight:400;color:#16191f;white-space:pre;letter-spacing:0.574px;-webkit-text-stroke:0.25px;">Daniil</div>
<div style="position:absolute;left:1105.55px;top:611.4px;line-height:22px;font-size:14px;font-weight:400;color:#16191f;white-space:pre;letter-spacing:0.086px;-webkit-text-stroke:0.25px;">Medvedev</div>
<div style="position:absolute;left:1460.65px;top:611.4px;line-height:22px;font-size:14px;font-weight:400;color:#16191f;white-space:pre;letter-spacing:-0.590px;-webkit-text-stroke:0.25px;">Russia</div>
<div style="position:absolute;left:359px;top:681px;width:1411px;height:1px;background:#eaeded"></div>
<div style="position:absolute;left:379.8px;top:651.4px;line-height:22px;font-size:14px;font-weight:400;color:#16191f;white-space:pre;-webkit-text-stroke:0.25px;">2</div>
<div style="position:absolute;left:449.55px;top:651.4px;line-height:22px;font-size:14px;font-weight:400;color:#16191f;white-space:pre;-webkit-text-stroke:0.25px;">6</div>
<div style="position:absolute;left:743.78px;top:651.4px;line-height:22px;font-size:14px;font-weight:400;color:#16191f;white-space:pre;letter-spacing:0.006px;-webkit-text-stroke:0.25px;">Jannik</div>
<div style="position:absolute;left:1106.06px;top:651.4px;line-height:22px;font-size:14px;font-weight:400;color:#16191f;white-space:pre;letter-spacing:-0.000px;-webkit-text-stroke:0.25px;">Sinner</div>
<div style="position:absolute;left:1460.51px;top:651.4px;line-height:22px;font-size:14px;font-weight:400;color:#16191f;white-space:pre;letter-spacing:0.683px;-webkit-text-stroke:0.25px;">Italy</div>
<div style="position:absolute;left:359px;top:721px;width:1411px;height:1px;background:#eaeded"></div>
<div style="position:absolute;left:379.8px;top:691.4px;line-height:22px;font-size:14px;font-weight:400;color:#16191f;white-space:pre;-webkit-text-stroke:0.25px;">3</div>
<div style="position:absolute;left:449.55px;top:691.4px;line-height:22px;font-size:14px;font-weight:400;color:#16191f;white-space:pre;-webkit-text-stroke:0.25px;">4</div>
<div style="position:absolute;left:742.85px;top:691.4px;line-height:22px;font-size:14px;font-weight:400;color:#16191f;white-space:pre;letter-spacing:-0.140px;-webkit-text-stroke:0.25px;">Roger</div>
<div style="position:absolute;left:1105.55px;top:691.4px;line-height:22px;font-size:14px;font-weight:400;color:#16191f;white-space:pre;letter-spacing:-0.092px;-webkit-text-stroke:0.25px;">Federer</div>
<div style="position:absolute;left:1461.16px;top:691.4px;line-height:22px;font-size:14px;font-weight:400;color:#16191f;white-space:pre;letter-spacing:0.276px;-webkit-text-stroke:0.25px;">Switzerland</div>
<div style="position:absolute;left:359px;top:761px;width:1411px;height:1px;background:#eaeded"></div>
<div style="position:absolute;left:379.8px;top:731.4px;line-height:22px;font-size:14px;font-weight:400;color:#16191f;white-space:pre;-webkit-text-stroke:0.25px;">4</div>
<div style="position:absolute;left:449.55px;top:731.4px;line-height:22px;font-size:14px;font-weight:400;color:#16191f;white-space:pre;-webkit-text-stroke:0.25px;">2</div>
<div style="position:absolute;left:742.85px;top:731.4px;line-height:22px;font-size:14px;font-weight:400;color:#16191f;white-space:pre;letter-spacing:0.144px;-webkit-text-stroke:0.25px;">Djokovic</div>
<div style="position:absolute;left:1105.55px;top:731.4px;line-height:22px;font-size:14px;font-weight:400;color:#16191f;white-space:pre;letter-spacing:0.110px;-webkit-text-stroke:0.25px;">Novak</div>
<div style="position:absolute;left:1461.16px;top:731.4px;line-height:22px;font-size:14px;font-weight:400;color:#16191f;white-space:pre;letter-spacing:-0.227px;-webkit-text-stroke:0.25px;">Serbia</div>
<div style="position:absolute;left:359px;top:801px;width:1411px;height:1px;background:#eaeded"></div>
<div style="position:absolute;left:379.8px;top:771.4px;line-height:22px;font-size:14px;font-weight:400;color:#16191f;white-space:pre;-webkit-text-stroke:0.25px;">5</div>
<div style="position:absolute;left:449.55px;top:771.4px;line-height:22px;font-size:14px;font-weight:400;color:#16191f;white-space:pre;-webkit-text-stroke:0.25px;">1</div>
<div style="position:absolute;left:743.97px;top:771.4px;line-height:22px;font-size:14px;font-weight:400;color:#16191f;white-space:pre;letter-spacing:-0.110px;-webkit-text-stroke:0.25px;">Alcaraz</div>
<div style="position:absolute;left:1105.99px;top:771.4px;line-height:22px;font-size:14px;font-weight:400;color:#16191f;white-space:pre;letter-spacing:-0.130px;-webkit-text-stroke:0.25px;">Carlos</div>
<div style="position:absolute;left:1461.16px;top:771.4px;line-height:22px;font-size:14px;font-weight:400;color:#16191f;white-space:pre;letter-spacing:0.008px;-webkit-text-stroke:0.25px;">Spain</div>
<div style="position:absolute;left:379.8px;top:811.4px;line-height:22px;font-size:14px;font-weight:400;color:#16191f;white-space:pre;-webkit-text-stroke:0.25px;">6</div>
<div style="position:absolute;left:449.55px;top:811.4px;line-height:22px;font-size:14px;font-weight:400;color:#16191f;white-space:pre;-webkit-text-stroke:0.25px;">3</div>
<div style="position:absolute;left:742.85px;top:811.4px;line-height:22px;font-size:14px;font-weight:400;color:#16191f;white-space:pre;letter-spacing:0.183px;-webkit-text-stroke:0.25px;">Rafael</div>
<div style="position:absolute;left:1105.55px;top:811.4px;line-height:22px;font-size:14px;font-weight:400;color:#16191f;white-space:pre;letter-spacing:0.448px;-webkit-text-stroke:0.25px;">Nadal</div>
<div style="position:absolute;left:1461.16px;top:811.4px;line-height:22px;font-size:14px;font-weight:400;color:#16191f;white-space:pre;letter-spacing:0.008px;-webkit-text-stroke:0.25px;">Spain</div>
</div>
</body></html>
